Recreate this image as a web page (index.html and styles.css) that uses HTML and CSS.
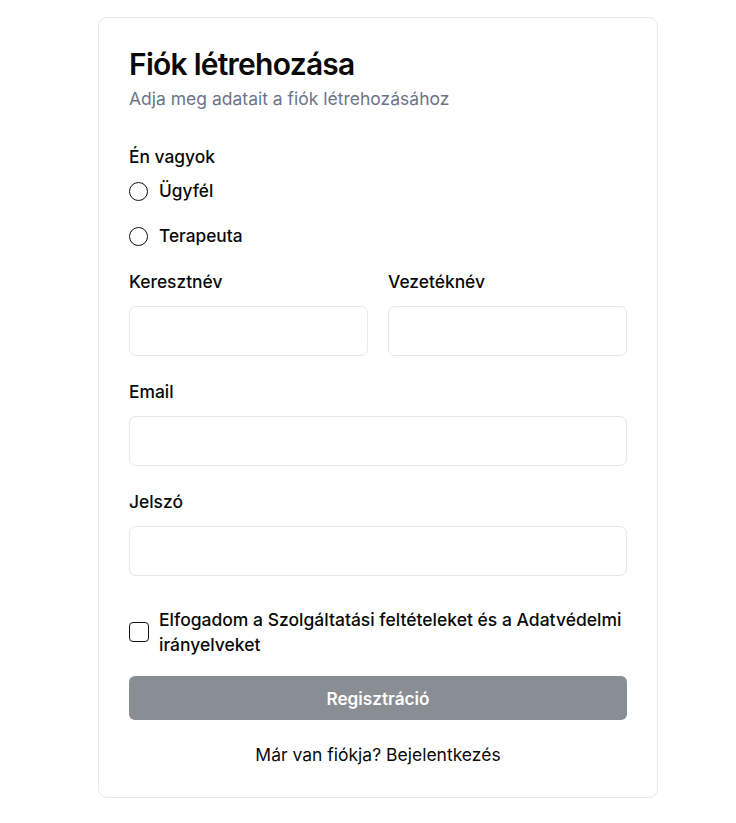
FILE: index.html
```html
<!DOCTYPE html>
<html lang="hu">
<head>
<meta charset="utf-8">
<title>Fiók létrehozása</title>
<link rel="stylesheet" href="styles.css">
</head>
<body>
<div class="card">
  <h1 class="title">Fiók létrehozása</h1>
  <p class="subtitle">Adja meg adatait a fiók létrehozásához</p>

  <div class="role">
    <div class="label">Én vagyok</div>
    <label class="radio-row"><span class="radio"></span><span>Ügyfél</span></label>
    <label class="radio-row"><span class="radio"></span><span>Terapeuta</span></label>
  </div>

  <div class="names">
    <div class="field">
      <div class="label">Keresztnév</div>
      <div class="input"></div>
    </div>
    <div class="field">
      <div class="label">Vezetéknév</div>
      <div class="input"></div>
    </div>
  </div>

  <div class="field block">
    <div class="label">Email</div>
    <div class="input"></div>
  </div>

  <div class="field block">
    <div class="label">Jelszó</div>
    <div class="input"></div>
  </div>

  <label class="terms"><span class="checkbox"></span><span class="terms-text">Elfogadom a Szolgáltatási feltételeket és a Adatvédelmi irányelveket</span></label>

  <div class="button">Regisztráció</div>

  <div class="login">Már van fiókja? Bejelentkezés</div>
</div>
</body>
</html>
```

FILE: styles.css
```css
* { box-sizing: border-box; }
html, body { margin: 0; padding: 0; background: #ffffff; }
body {
  font-family: Inter, "Noto Sans", sans-serif;
  color: #0a0a0a;
  padding: 17px 0 0 98px;
}
.card {
  width: 560px;
  border: 1px solid #e5e7eb;
  border-radius: 9px;
  padding: 26px 30px 30px 30px;
}
.title {
  margin: 0;
  font-size: 30px;
  line-height: 40px;
  font-weight: 600;
  letter-spacing: -0.75px;
}
.subtitle {
  margin: 3px 0 0 0;
  font-size: 17.5px;
  line-height: 24px;
  color: #6b7588;
}
.label {
  font-size: 17.4px;
  line-height: 24px;
  font-weight: 500;
}
.role { margin-top: 34px; }
.radio-row {
  display: flex;
  align-items: center;
  gap: 11px;
  font-size: 17.3px;
  line-height: 24px;
  font-weight: 500;
  margin-top: 10px;
}
.radio-row + .radio-row { margin-top: 21px; }
.radio {
  width: 19px;
  height: 19px;
  border: 1.5px solid #111;
  border-radius: 50%;
  flex: none;
}
.names {
  display: grid;
  grid-template-columns: 1fr 1fr;
  gap: 20px;
  margin-top: 22px;
}
.block { margin-top: 24px; }
.input {
  margin-top: 12px;
  height: 50px;
  border: 1px solid #e5e7eb;
  border-radius: 7px;
}
.terms {
  display: flex;
  align-items: center;
  gap: 10px;
  margin-top: 31px;
  font-size: 17.5px;
  line-height: 25px;
  font-weight: 500;
}
.checkbox {
  width: 20px;
  height: 20px;
  border: 1.5px solid #111;
  border-radius: 4px;
  flex: none;
}
.button {
  margin-top: 19px;
  height: 44px;
  border-radius: 6px;
  background: #898d94;
  color: #fff;
  font-weight: 600;
  font-size: 17.2px;
  display: flex;
  align-items: center;
  justify-content: center;
}
.login {
  margin-top: 23px;
  text-align: center;
  font-size: 17.5px;
  line-height: 24px;
}
```
